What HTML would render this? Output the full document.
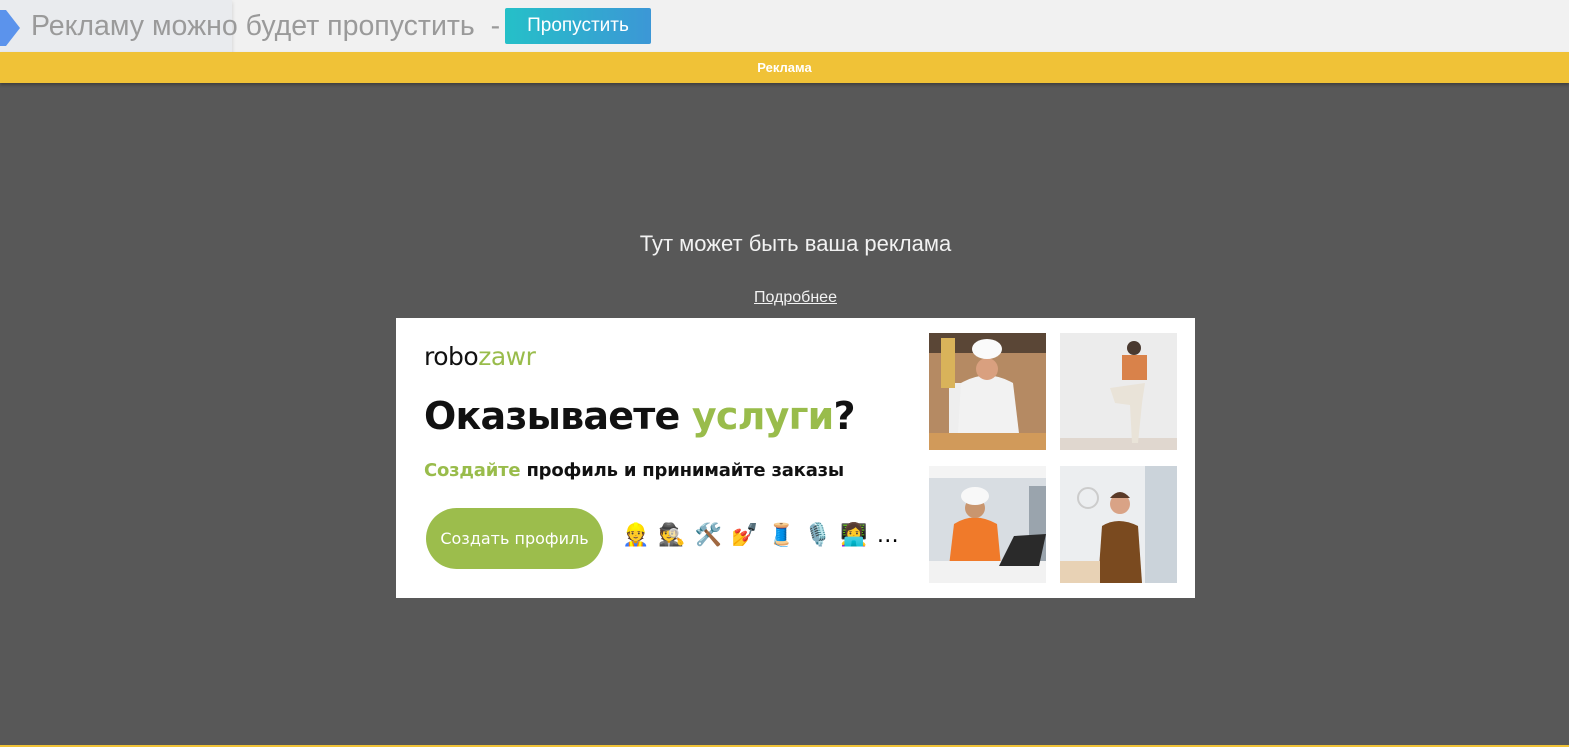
<!DOCTYPE html>
<html><head><meta charset="utf-8"><style>
*{margin:0;padding:0;box-sizing:border-box}
body{width:1569px;height:747px;overflow:hidden;background:#585858;font-family:"Liberation Sans","DejaVu Sans",sans-serif;position:relative}
.top{position:absolute;left:0;top:0;width:1569px;height:52px;background:#f1f1f1}
.panel{position:absolute;left:0;top:0;width:232px;height:55px;background:#e9ebee;border-bottom:2px solid #6a9be8;box-shadow:0 2px 4px rgba(0,0,0,.15)}
.chev{position:absolute;left:0;top:10px;width:0;height:0;border-top:18px solid transparent;border-bottom:18px solid transparent;border-left:14px solid #5b93ec}
.chev2{position:absolute;left:0;top:10px;width:6px;height:36px;background:#5b93ec}
.msg{position:absolute;left:31px;top:10px;font-size:28.5px;color:#9a9a9a;white-space:nowrap}
.btn{position:absolute;left:505px;top:8px;width:146px;height:36px;background:linear-gradient(90deg,#25c0c8,#3c97d6);color:#fff;font-size:19px;text-align:center;line-height:36px;border-radius:2px}
.yel{position:absolute;left:0;top:52px;width:1569px;height:31px;background:#f0c237;color:#fff;font-weight:bold;font-size:13px;text-align:center;line-height:32px;box-shadow:0 2px 3px rgba(0,0,0,.3)}
.t1{position:absolute;left:0;width:1569px;top:231px;text-align:center;color:#f2f2f2;font-size:22px;padding-left:22px}
.t2{position:absolute;left:0;width:1569px;top:289px;text-align:center;color:#f2f2f2;font-size:16px;text-decoration:underline;padding-left:22px}
.ad{position:absolute;left:396px;top:318px;width:799px;height:280px;background:#fff;font-family:"DejaVu Sans","Liberation Sans",sans-serif}
.logo{position:absolute;left:28px;top:24px;font-size:25px;color:#111;letter-spacing:-0.5px}
.g{color:#99bc4b}
.h{position:absolute;left:28px;top:76px;font-size:38px;font-weight:bold;color:#111;letter-spacing:-0.8px}
.s{position:absolute;left:28px;top:142px;font-size:18px;font-weight:bold;color:#111;letter-spacing:-0.2px}
.cb{position:absolute;left:30px;top:190px;width:177px;height:61px;border-radius:31px;background:#9cbd4c;color:#fff;font-size:16px;text-align:center;line-height:61px}
.em{position:absolute;left:226px;top:205px;font-size:22px;letter-spacing:9px;white-space:nowrap}
.ph{position:absolute;width:117px;height:117px;overflow:hidden}
.bot{position:absolute;left:0;top:745px;width:1569px;height:2px;background:#f0c237}
</style></head><body>
<div class="top"></div>
<div class="panel"></div>
<div class="chev2"></div><div class="chev" style="left:6px"></div>
<div class="msg">Рекламу можно будет пропустить &nbsp;-</div>
<div class="btn">Пропустить</div>
<div class="yel">Реклама</div>
<div class="t1">Тут может быть ваша реклама</div>
<div class="t2">Подробнее</div>
<div class="ad">
<div class="logo">robo<span class="g">zawr</span></div>
<div class="h">Оказываете <span class="g">услуги</span>?</div>
<div class="s"><span class="g">Создайте</span> профиль и принимайте заказы</div>
<div class="cb">Создать профиль</div>
<div class="em">👷🕵️🛠️💅🧵🎙️👩‍💻…</div>
<svg class="ph" style="left:533px;top:15px" viewBox="0 0 117 117"><rect width="117" height="117" fill="#b58a63"/><rect width="117" height="20" fill="#5a4636"/><rect x="20" y="50" width="14" height="50" fill="#eee"/><rect x="12" y="5" width="14" height="50" fill="#d9b35a"/><path d="M28 117 L32 50 Q58 35 84 50 L92 117Z" fill="#f2f2f2"/><circle cx="58" cy="36" r="11" fill="#d9a07f"/><ellipse cx="58" cy="16" rx="15" ry="10" fill="#fafafa"/><rect x="0" y="100" width="117" height="17" fill="#d19a5a"/></svg>
<svg class="ph" style="left:664px;top:15px" viewBox="0 0 117 117"><rect width="117" height="117" fill="#ececec"/><rect y="105" width="117" height="12" fill="#e0d7cf"/><circle cx="74" cy="15" r="7" fill="#4a3a30"/><rect x="62" y="22" width="25" height="25" fill="#d9824a"/><path d="M50 55 L85 50 L82 70 L78 110 L72 110 L70 72 L55 70Z" fill="#e9e3d8"/></svg>
<svg class="ph" style="left:533px;top:148px" viewBox="0 0 117 117"><rect width="117" height="117" fill="#d8dde2"/><rect y="0" width="117" height="12" fill="#f4f4f4"/><rect x="100" y="20" width="17" height="80" fill="#9aa4ad"/><path d="M20 100 L25 58 Q45 45 68 58 L72 100Z" fill="#f07a2a"/><circle cx="46" cy="42" r="10" fill="#c9966f"/><ellipse cx="46" cy="30" rx="14" ry="9" fill="#f8f8f8"/><rect x="0" y="95" width="117" height="22" fill="#f2f2f2"/><path d="M70 100 L85 70 L117 68 L110 100Z" fill="#2a2a2a"/></svg>
<svg class="ph" style="left:664px;top:148px" viewBox="0 0 117 117"><rect width="117" height="117" fill="#eceef0"/><rect x="85" y="0" width="32" height="117" fill="#cbd3da"/><circle cx="28" cy="32" r="10" fill="none" stroke="#ccc" stroke-width="2"/><path d="M38 117 L42 60 Q58 50 78 60 L82 117Z" fill="#7a4a1f"/><circle cx="60" cy="38" r="10" fill="#d9a386"/><path d="M50 32 Q60 20 70 32" fill="#5a3a28"/><rect x="0" y="95" width="40" height="22" fill="#e8d2b5"/></svg>
</div>
<div class="bot"></div>
</body></html>
